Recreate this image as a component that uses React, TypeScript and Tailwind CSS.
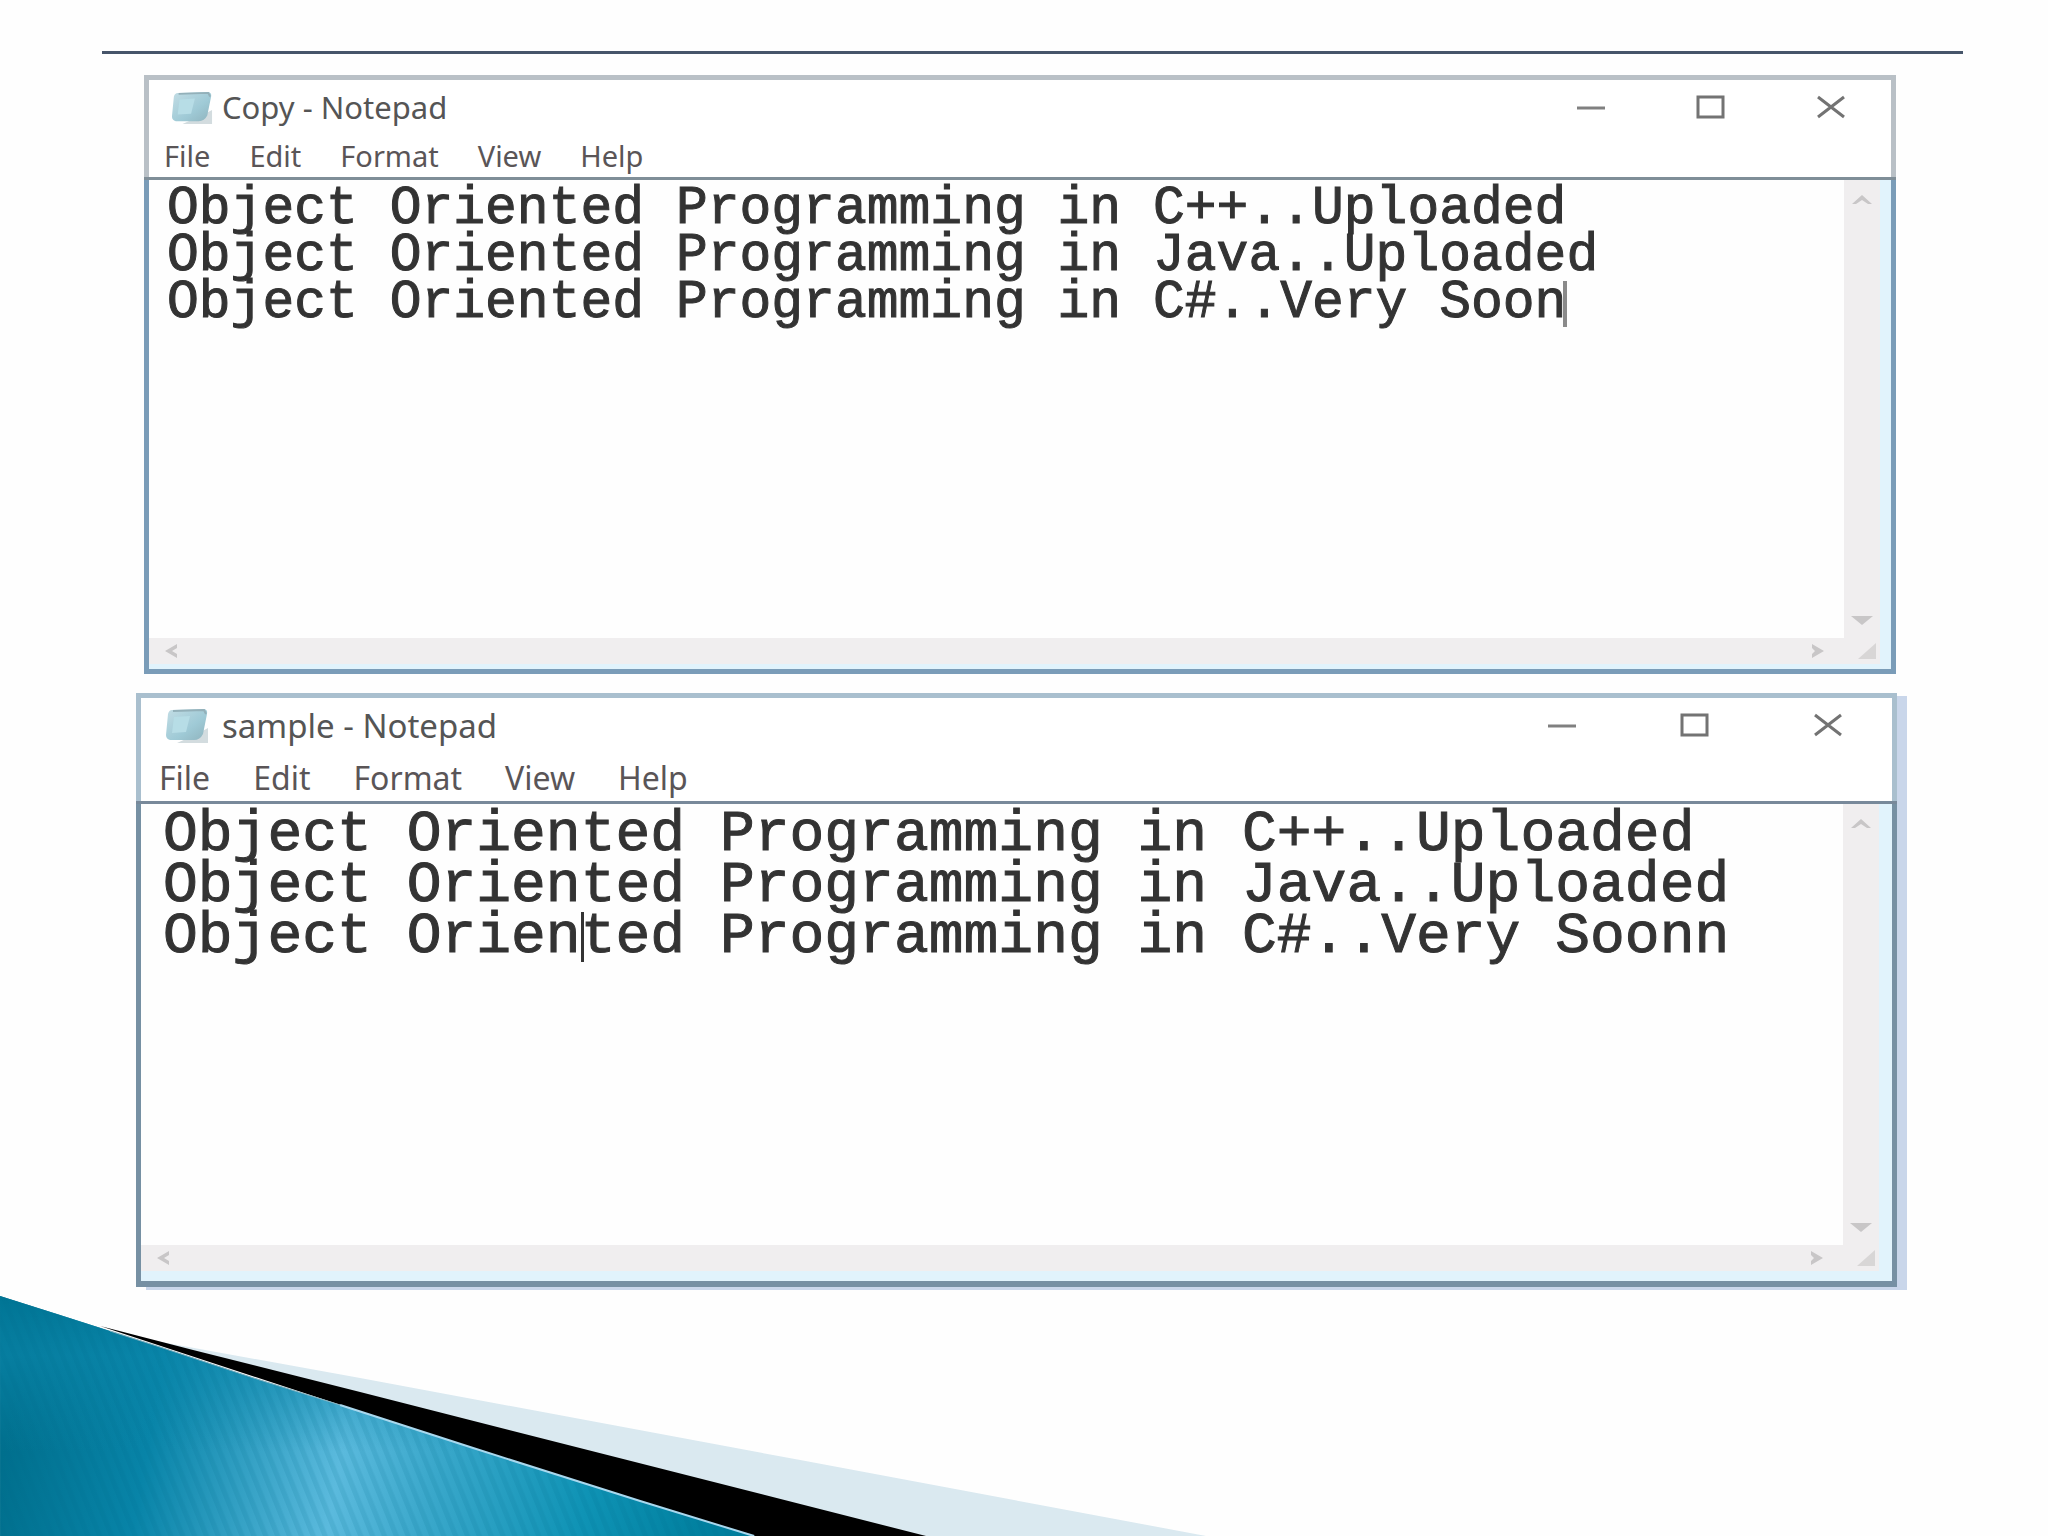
import React from "react";

type Kind = "copy" | "sample";

const styles = {
  copy: {
    frame: "ml-[144px] mr-[152px] mt-[21px]",
    head: "border-x-[5px] border-t-[5px] border-[#b9c0c6] h-[102px]",
    title: "h-[55px] pl-[22px]",
    titleText: "text-[31px] ml-[9px]",
    icon: "w-[42px] h-[34px]",
    controls: "gap-[88px] pr-[44px]",
    menu: "gap-[39px] pl-[15px] text-[29px] h-[42px]",
    body: "border-x-[5px] border-b-[5px] border-[#7a9cb8] pb-[5px] pr-[11px]",
    divider: "bg-[#7f8e98]",
    editor: "text-[53px] leading-[47px]",
    area: "h-[458px] pt-[6px] pl-[18px]",
    caret: "left-[44ch] ml-[15px] top-[101px] h-[46px] w-[4px] bg-[#8a8a8a]",
  },
  sample: {
    frame: "ml-[136px] mr-[151px] mt-[19px] shadow-[10px_3px_0_#c9d6ea]",
    head: "border-x-[5px] border-t-[5px] border-[#a9bfce] h-[108px]",
    title: "h-[56px] pl-[24px]",
    titleText: "text-[33px] ml-[13px]",
    icon: "w-[44px] h-[36px]",
    controls: "gap-[101px] pr-[48px]",
    menu: "gap-[43px] pl-[18px] text-[32px] h-[48px]",
    body: "border-x-[5px] border-b-[6px] border-[#7690a3] pb-[10px] pr-[13px]",
    divider: "bg-[#78899a]",
    editor: "text-[58px] leading-[51px]",
    area: "h-[441px] pt-[5px] pl-[22px]",
    caret: "left-[12ch] ml-[22px] top-[108px] h-[50px] w-[3px] bg-[#333333]",
  },
};

function NotepadIcon({ className }: { className: string }) {
  return (
    <svg viewBox="0 0 44 36" preserveAspectRatio="none" className={className} aria-hidden="true">
      <defs>
        <linearGradient id="pad" x1="0" y1="0" x2="1" y2="1">
          <stop offset="0" stopColor="#c3dde5" />
          <stop offset="0.6" stopColor="#9fcad6" />
          <stop offset="1" stopColor="#8fb3bd" />
        </linearGradient>
      </defs>
      <path d="M32 26 L43 20 L43 35 L12 35 Z" fill="#d3dcdf" />
      <path d="M7 2 L38 1 Q43 1 42 6 L38 26 Q35 32 29 32 L5 32 Q1 31 1 27 L3 6 Q4 2 7 2 Z" fill="url(#pad)" />
      <path d="M8 3 L39 2 L41 6" fill="none" stroke="#93b0b9" strokeWidth="2" />
      <path d="M9 9 L25 8 L21 24 L7 25 Z" fill="#b7dde6" />
    </svg>
  );
}

const arrows = {
  up: "M1 10 L11 1 L21 10 L17 10 L11 6 L5 10 Z",
  down: "M0 1 L22 1 L11 10 Z",
  left: "M14 1 L2 8 L14 15 L14 11 L9 8 L14 5 Z",
  right: "M2 1 L14 8 L2 15 L2 11 L5 8 L2 5 Z",
};

function Arrow({ dir, className }: { dir: keyof typeof arrows; className: string }) {
  const flat = dir === "up" || dir === "down";
  return (
    <button type="button" aria-label={"Scroll " + dir} className={className}>
      <svg
        viewBox={flat ? "0 0 22 11" : "0 0 16 16"}
        className={flat ? "w-[22px] h-[11px]" : "w-[16px] h-[16px]"}
      >
        <path d={arrows[dir]} fill="#c8c6c7" />
      </svg>
    </button>
  );
}

function Notepad({ kind, name, text }: { kind: Kind; name: string; text: string }) {
  const s = styles[kind];
  return (
    <section className={`relative ${s.frame}`} aria-label={`${name} - Notepad`}>
      <header className={`bg-white ${s.head}`}>
        <div className={`flex items-center ${s.title}`}>
          <NotepadIcon className={s.icon} />
          <h2 className={`whitespace-nowrap text-[#555555] ${s.titleText}`}>{name} - Notepad</h2>
          <div className={`ml-auto flex items-center ${s.controls}`}>
            <button type="button" aria-label="Minimize">
              <svg viewBox="0 0 32 26" className="w-[32px] h-[26px]">
                <path d="M2 13 H30" stroke="#808080" strokeWidth="3" />
              </svg>
            </button>
            <button type="button" aria-label="Maximize">
              <svg viewBox="0 0 32 26" className="w-[32px] h-[26px]">
                <rect x="3" y="2" width="25" height="20" fill="none" stroke="#737373" strokeWidth="3" />
              </svg>
            </button>
            <button type="button" aria-label="Close">
              <svg viewBox="0 0 32 26" className="w-[32px] h-[26px]">
                <path d="M3 2 L29 22 M29 2 L3 22" stroke="#737373" strokeWidth="3" />
              </svg>
            </button>
          </div>
        </div>
        <nav className={`flex items-center text-[#5a5557] ${s.menu}`}>
          {["File", "Edit", "Format", "View", "Help"].map((m) => (
            <button key={m} type="button">
              {m}
            </button>
          ))}
        </nav>
      </header>
      <div className={`h-[3px] ${s.divider}`} />
      <div className={`bg-[#e1f3fc] ${s.body}`}>
        <div className="flex">
          <div className={`relative flex min-w-0 flex-1 font-['Liberation_Mono',monospace] ${s.editor}`}>
            <textarea
              aria-label={`${name} text`}
              defaultValue={text}
              spellCheck={false}
              wrap="off"
              className={`block w-full resize-none overflow-hidden bg-[#fefefe] text-[#333333] outline-none [-webkit-text-stroke:1px_#333333] ${s.area}`}
            />
            <span className={`absolute ${s.caret}`} />
          </div>
          <div className="flex w-[36px] flex-col items-center justify-between bg-[#f0eeef] pt-[14px] pb-[12px]">
            <Arrow dir="up" className="flex" />
            <Arrow dir="down" className="flex" />
          </div>
        </div>
        <div className="flex h-[26px] items-center bg-[#f0eeef] pl-[14px]">
          <Arrow dir="left" className="flex" />
          <Arrow dir="right" className="ml-auto flex" />
          <svg viewBox="0 0 24 20" className="ml-[28px] mr-[2px] h-[20px] w-[24px]" aria-hidden="true">
            <path d="M22 2 V18 H4 Z" fill="#d8d6d6" />
          </svg>
        </div>
      </div>
    </section>
  );
}

function Swoosh() {
  return (
    <svg viewBox="0 0 1208 240" className="mt-auto block h-auto w-[59%]" aria-hidden="true">
      <defs>
        <linearGradient id="teal" gradientUnits="userSpaceOnUse" x1="0" y1="170" x2="700" y2="290">
          <stop offset="0" stopColor="#006f8d" />
          <stop offset="0.2" stopColor="#0884a8" />
          <stop offset="0.47" stopColor="#5bbadd" />
          <stop offset="0.6" stopColor="#3ba8cb" />
          <stop offset="0.82" stopColor="#0f93b5" />
          <stop offset="1" stopColor="#007f9e" />
        </linearGradient>
        <linearGradient id="shade" x1="0" y1="0" x2="0" y2="1">
          <stop offset="0" stopColor="#007595" stopOpacity="0.9" />
          <stop offset="0.25" stopColor="#0a86aa" stopOpacity="0.65" />
          <stop offset="0.65" stopColor="#0a86aa" stopOpacity="0" />
        </linearGradient>
        <pattern id="ribs" width="11" height="10" patternUnits="userSpaceOnUse" patternTransform="rotate(-22)">
          <rect width="5" height="10" fill="#006a8c" fillOpacity="0.12" />
        </pattern>
      </defs>
      <path d="M150 44 L360 82 L800 164 L1206 240 H900 Z" fill="#dae9f0" />
      <path d="M100 30 L193 54 L360 96 L800 208 L926 240 H740 Z" fill="#000000" />
      <path d="M0 0 L60 19 L110 35 L160 51 L260 84 L340 109 L473 152 L640 205 L754 240 H0 Z" fill="url(#teal)" />
      <path d="M0 0 L60 19 L110 35 L160 51 L260 84 L340 109 L473 152 L640 205 L754 240 H0 Z" fill="url(#shade)" />
      <path d="M0 0 L60 19 L110 35 L160 51 L260 84 L340 109 L473 152 L640 205 L754 240 H0 Z" fill="url(#ribs)" />
      <path d="M110 35 L160 51 L260 84 L340 109" fill="none" stroke="#7fb0bf" strokeWidth="1" />
      <path d="M340 109 L473 152 L640 205 L754 240" fill="none" stroke="#a9d8ee" strokeWidth="2" />
    </svg>
  );
}

export default function App() {
  return (
    <main className="flex min-h-screen flex-col overflow-hidden bg-[#fefefe] pt-[51px] font-['Noto_Sans',sans-serif]">
      <hr className="ml-[102px] mr-[85px] h-[3px] border-0 bg-[#46556a]" />
      <Notepad
        kind="copy"
        name="Copy"
        text={
          "Object Oriented Programming in C++..Uploaded\nObject Oriented Programming in Java..Uploaded\nObject Oriented Programming in C#..Very Soon"
        }
      />
      <Notepad
        kind="sample"
        name="sample"
        text={
          "Object Oriented Programming in C++..Uploaded\nObject Oriented Programming in Java..Uploaded\nObject Oriented Programming in C#..Very Soonn"
        }
      />
      <Swoosh />
    </main>
  );
}
